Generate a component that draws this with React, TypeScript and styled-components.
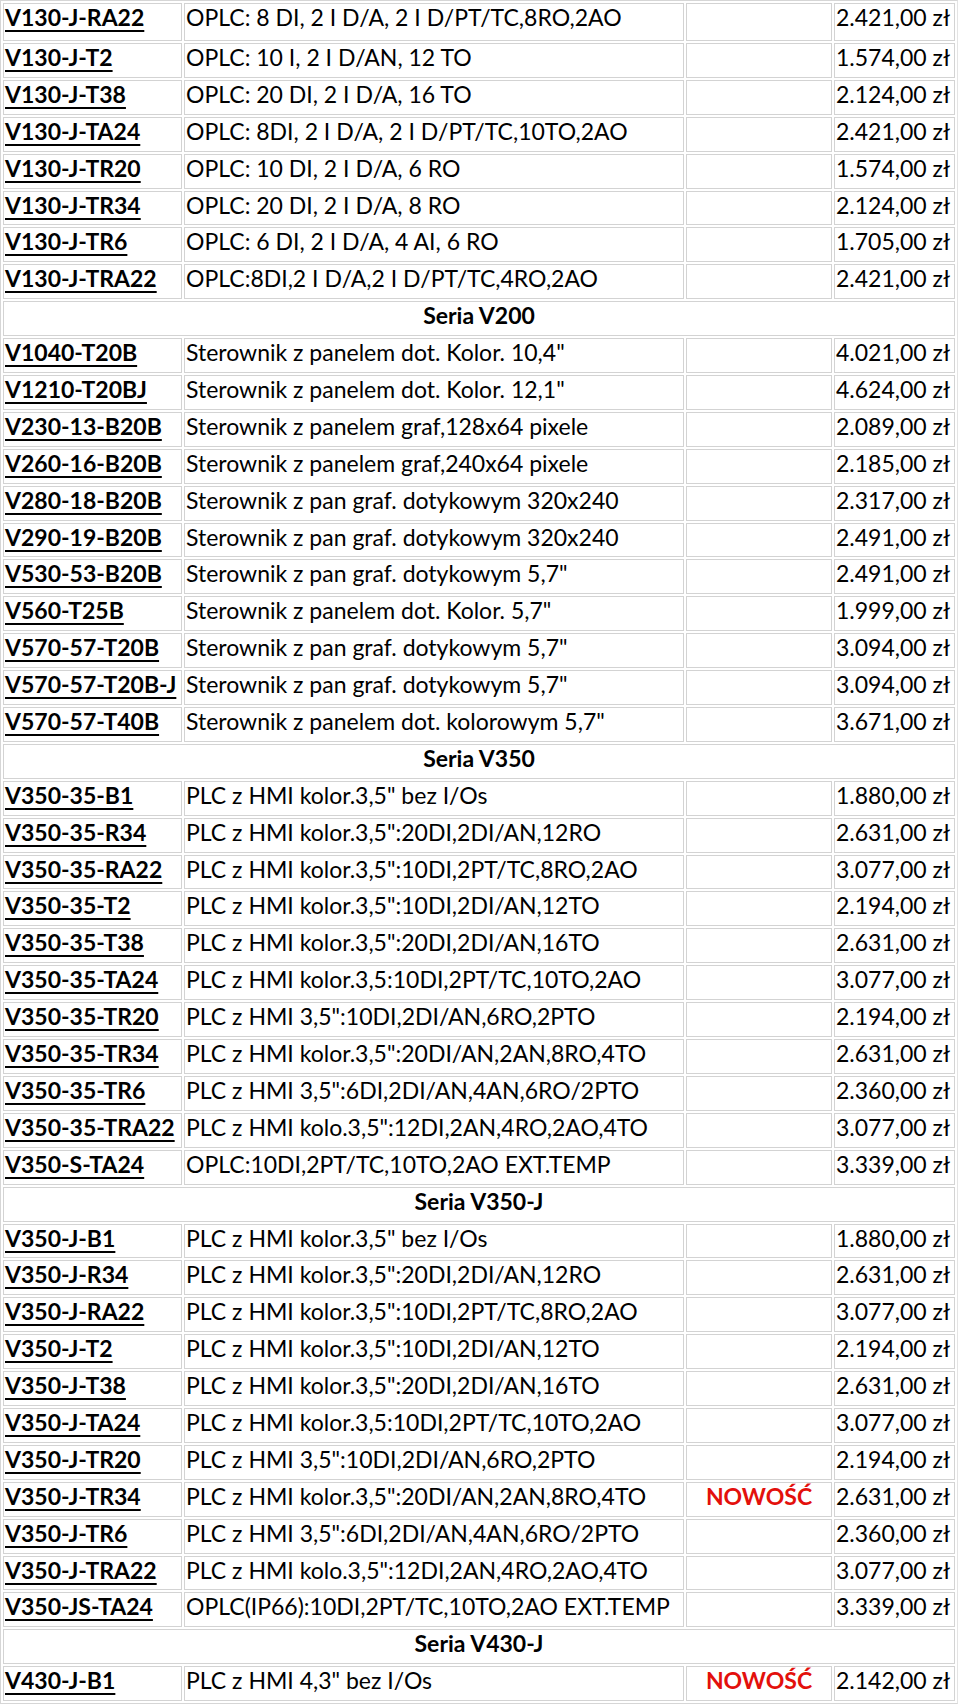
import React from "react";
import styled, { createGlobalStyle } from "styled-components";

type Item = { code: string; desc: string; price: string; isNew?: boolean };
type Section = { title?: string; items: Item[] };

const sections: Section[] = [
  {
    items: [
      { code: "V130-J-RA22", desc: "OPLC: 8 DI, 2 I D/A, 2 I D/PT/TC,8RO,2AO", price: "2.421,00 zł" },
      { code: "V130-J-T2", desc: "OPLC: 10 I, 2 I D/AN, 12 TO", price: "1.574,00 zł" },
      { code: "V130-J-T38", desc: "OPLC: 20 DI, 2 I D/A, 16 TO", price: "2.124,00 zł" },
      { code: "V130-J-TA24", desc: "OPLC: 8DI, 2 I D/A, 2 I D/PT/TC,10TO,2AO", price: "2.421,00 zł" },
      { code: "V130-J-TR20", desc: "OPLC: 10 DI, 2 I D/A, 6 RO", price: "1.574,00 zł" },
      { code: "V130-J-TR34", desc: "OPLC: 20 DI, 2 I D/A, 8 RO", price: "2.124,00 zł" },
      { code: "V130-J-TR6", desc: "OPLC: 6 DI, 2 I D/A, 4 AI, 6 RO", price: "1.705,00 zł" },
      { code: "V130-J-TRA22", desc: "OPLC:8DI,2 I D/A,2 I D/PT/TC,4RO,2AO", price: "2.421,00 zł" },
    ],
  },
  {
    title: "Seria V200",
    items: [
      { code: "V1040-T20B", desc: 'Sterownik z panelem dot. Kolor. 10,4"', price: "4.021,00 zł" },
      { code: "V1210-T20BJ", desc: 'Sterownik z panelem dot. Kolor. 12,1"', price: "4.624,00 zł" },
      { code: "V230-13-B20B", desc: "Sterownik z panelem graf,128x64 pixele", price: "2.089,00 zł" },
      { code: "V260-16-B20B", desc: "Sterownik z panelem graf,240x64 pixele", price: "2.185,00 zł" },
      { code: "V280-18-B20B", desc: "Sterownik z pan graf. dotykowym 320x240", price: "2.317,00 zł" },
      { code: "V290-19-B20B", desc: "Sterownik z pan graf. dotykowym 320x240", price: "2.491,00 zł" },
      { code: "V530-53-B20B", desc: 'Sterownik z pan graf. dotykowym 5,7"', price: "2.491,00 zł" },
      { code: "V560-T25B", desc: 'Sterownik z panelem dot. Kolor. 5,7"', price: "1.999,00 zł" },
      { code: "V570-57-T20B", desc: 'Sterownik z pan graf. dotykowym 5,7"', price: "3.094,00 zł" },
      { code: "V570-57-T20B-J", desc: 'Sterownik z pan graf. dotykowym 5,7"', price: "3.094,00 zł" },
      { code: "V570-57-T40B", desc: 'Sterownik z panelem dot. kolorowym 5,7"', price: "3.671,00 zł" },
    ],
  },
  {
    title: "Seria V350",
    items: [
      { code: "V350-35-B1", desc: 'PLC z HMI kolor.3,5" bez I/Os', price: "1.880,00 zł" },
      { code: "V350-35-R34", desc: 'PLC z HMI kolor.3,5":20DI,2DI/AN,12RO', price: "2.631,00 zł" },
      { code: "V350-35-RA22", desc: 'PLC z HMI kolor.3,5":10DI,2PT/TC,8RO,2AO', price: "3.077,00 zł" },
      { code: "V350-35-T2", desc: 'PLC z HMI kolor.3,5":10DI,2DI/AN,12TO', price: "2.194,00 zł" },
      { code: "V350-35-T38", desc: 'PLC z HMI kolor.3,5":20DI,2DI/AN,16TO', price: "2.631,00 zł" },
      { code: "V350-35-TA24", desc: "PLC z HMI kolor.3,5:10DI,2PT/TC,10TO,2AO", price: "3.077,00 zł" },
      { code: "V350-35-TR20", desc: 'PLC z HMI 3,5":10DI,2DI/AN,6RO,2PTO', price: "2.194,00 zł" },
      { code: "V350-35-TR34", desc: 'PLC z HMI kolor.3,5":20DI/AN,2AN,8RO,4TO', price: "2.631,00 zł" },
      { code: "V350-35-TR6", desc: 'PLC z HMI 3,5":6DI,2DI/AN,4AN,6RO/2PTO', price: "2.360,00 zł" },
      { code: "V350-35-TRA22", desc: 'PLC z HMI kolo.3,5":12DI,2AN,4RO,2AO,4TO', price: "3.077,00 zł" },
      { code: "V350-S-TA24", desc: "OPLC:10DI,2PT/TC,10TO,2AO EXT.TEMP", price: "3.339,00 zł" },
    ],
  },
  {
    title: "Seria V350-J",
    items: [
      { code: "V350-J-B1", desc: 'PLC z HMI kolor.3,5" bez I/Os', price: "1.880,00 zł" },
      { code: "V350-J-R34", desc: 'PLC z HMI kolor.3,5":20DI,2DI/AN,12RO', price: "2.631,00 zł" },
      { code: "V350-J-RA22", desc: 'PLC z HMI kolor.3,5":10DI,2PT/TC,8RO,2AO', price: "3.077,00 zł" },
      { code: "V350-J-T2", desc: 'PLC z HMI kolor.3,5":10DI,2DI/AN,12TO', price: "2.194,00 zł" },
      { code: "V350-J-T38", desc: 'PLC z HMI kolor.3,5":20DI,2DI/AN,16TO', price: "2.631,00 zł" },
      { code: "V350-J-TA24", desc: "PLC z HMI kolor.3,5:10DI,2PT/TC,10TO,2AO", price: "3.077,00 zł" },
      { code: "V350-J-TR20", desc: 'PLC z HMI 3,5":10DI,2DI/AN,6RO,2PTO', price: "2.194,00 zł" },
      { code: "V350-J-TR34", desc: 'PLC z HMI kolor.3,5":20DI/AN,2AN,8RO,4TO', price: "2.631,00 zł", isNew: true },
      { code: "V350-J-TR6", desc: 'PLC z HMI 3,5":6DI,2DI/AN,4AN,6RO/2PTO', price: "2.360,00 zł" },
      { code: "V350-J-TRA22", desc: 'PLC z HMI kolo.3,5":12DI,2AN,4RO,2AO,4TO', price: "3.077,00 zł" },
      { code: "V350-JS-TA24", desc: "OPLC(IP66):10DI,2PT/TC,10TO,2AO EXT.TEMP", price: "3.339,00 zł" },
    ],
  },
  {
    title: "Seria V430-J",
    items: [{ code: "V430-J-B1", desc: 'PLC z HMI 4,3" bez I/Os', price: "2.142,00 zł", isNew: true }],
  },
];

const GlobalStyle = createGlobalStyle`
  body {
    margin: 0;
    background: #ffffff;
    font-family: Lato, "Open Sans", "Liberation Sans", sans-serif;
    color: #000;
  }
`;

const PriceGrid = styled.div`
  display: grid;
  grid-template-columns: 179px 500px 146px 121px;
  grid-template-rows: 38px;
  grid-auto-rows: 34.9px;
  gap: 2px;
  padding: 2px;
  width: max-content;
  border: 1px solid #d6d6d6;
  border-right-color: #e4e4e4;
`;

const Cell = styled.div<{ $align?: "left" | "center" }>`
  border: 1px solid #d3d3d3;
  padding: 0 1px;
  font-size: 23px;
  line-height: 1.2;
  white-space: nowrap;
  overflow: hidden;
  text-align: ${(p) => p.$align ?? "left"};
`;

const HeaderCell = styled(Cell)`
  grid-column: 1 / -1;
  font-weight: 700;
  text-align: center;
`;

const Code = styled.a`
  color: #000;
  font-weight: 700;
  text-decoration: underline;
  text-decoration-thickness: 2px;
  text-underline-offset: 4px;
`;

const NewBadge = styled.span`
  color: #e3100c;
  font-weight: 700;
`;

export default function App() {
  return (
    <>
      <GlobalStyle />
      <PriceGrid>
        {sections.map((section, si) => (
          <React.Fragment key={si}>
            {section.title && <HeaderCell>{section.title}</HeaderCell>}
            {section.items.map((item) => (
              <React.Fragment key={item.code}>
                <Cell>
                  <Code href="#">{item.code}</Code>
                </Cell>
                <Cell>{item.desc}</Cell>
                <Cell $align="center">{item.isNew && <NewBadge>NOWOŚĆ</NewBadge>}</Cell>
                <Cell>{item.price}</Cell>
              </React.Fragment>
            ))}
          </React.Fragment>
        ))}
      </PriceGrid>
    </>
  );
}
